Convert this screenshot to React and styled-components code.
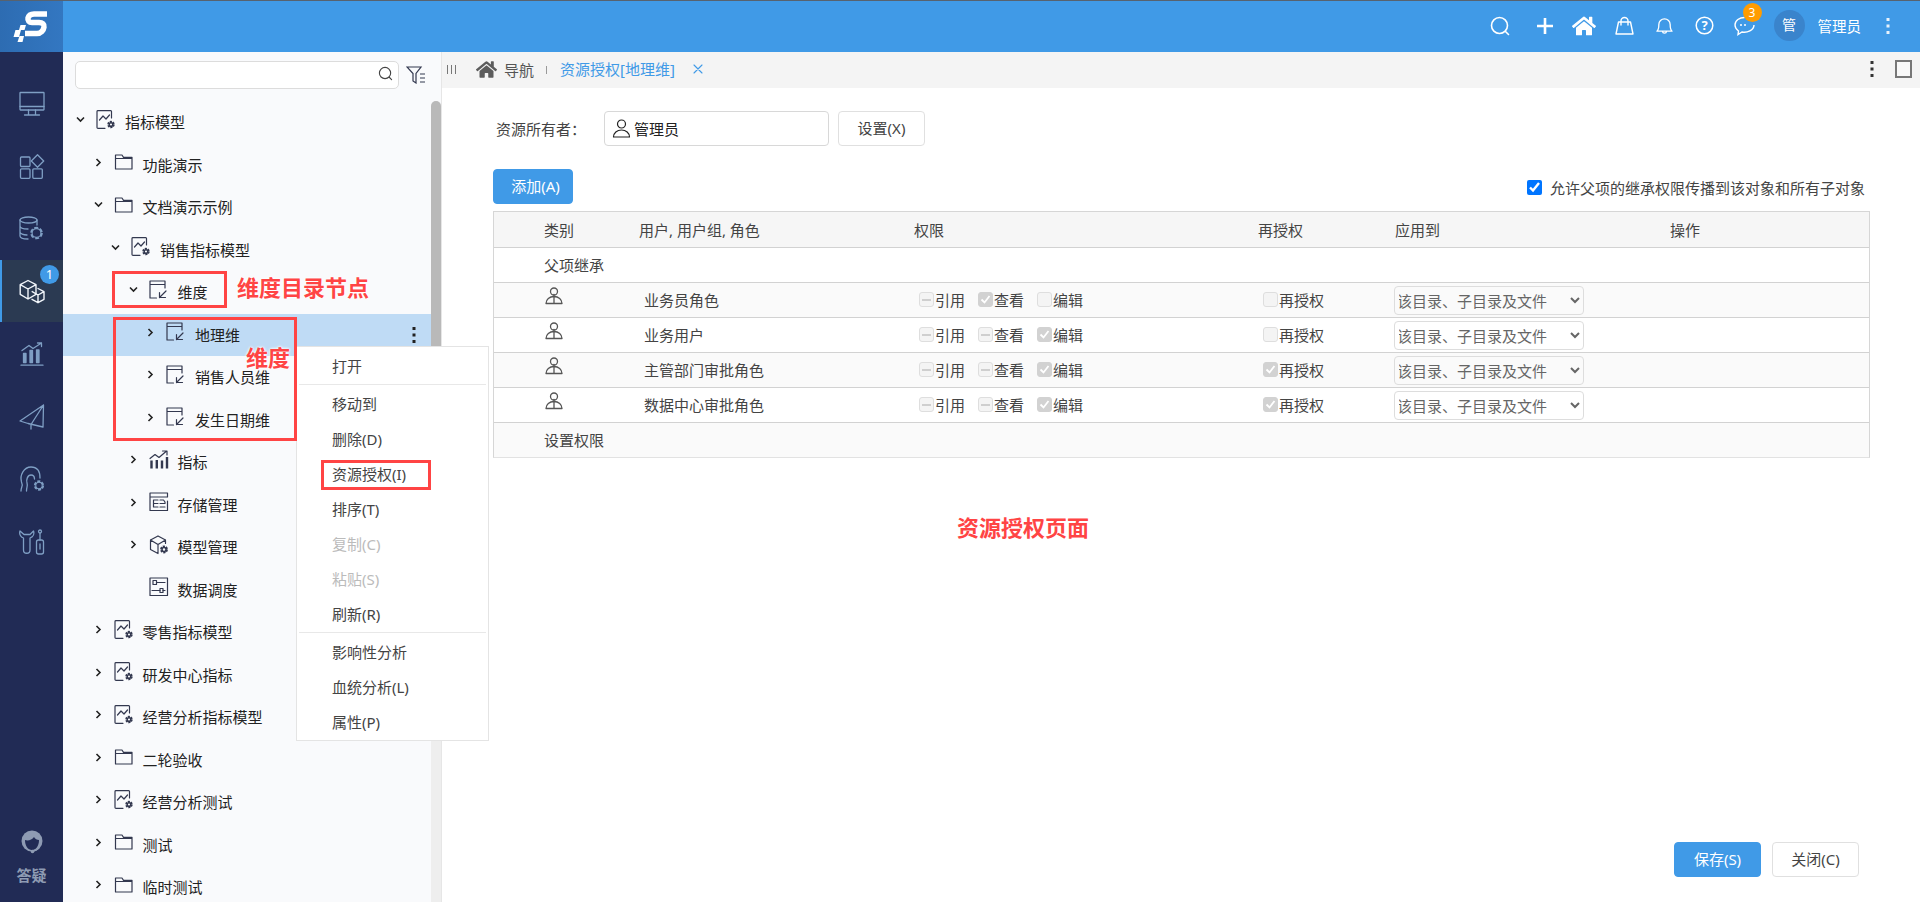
import React from "react";
import styled, { createGlobalStyle } from "styled-components";
import { FaHome } from "react-icons/fa";

const BLUE = "#409ae7";
const RED = "#ff4444";

const GlobalStyle = createGlobalStyle`
  html, body { margin: 0; padding: 0; height: 100%; overflow: hidden; }
  #root { height: 100%; }
  * { box-sizing: border-box; }
  body {
    font-family: "Noto Sans", "Noto Sans CJK SC", sans-serif;
    font-size: 15px;
    color: #333;
  }
`;

const Page = styled.div`
  position: relative;
  display: flex;
  width: 1920px;
  height: 902px;
  overflow: hidden;
  background: #fff;
`;

/* left rail */
const Rail = styled.div`
  width: 63px;
  flex: none;
  display: flex;
  flex-direction: column;
  background: #212b55;
`;

const Logo = styled.div`
  height: 52px;
  flex: none;
  border-top: 1px solid #57626f;
  background: linear-gradient(90deg, #2d6cb2, #3377c1);
  display: flex;
  align-items: center;
  justify-content: center;
`;

const RailNav = styled.div`
  padding-top: 20px;
  flex: 1;
`;

const RailItem = styled.div`
  position: relative;
  height: 62.5px;
  display: flex;
  align-items: center;
  justify-content: center;
  padding-top: 2px;
  color: ${(p) => (p.$active ? "#f2f6fb" : "#7f9fc4")};
  background: ${(p) => (p.$active ? "#2b3a52" : "transparent")};
  border-left: ${(p) => (p.$active ? `2px solid ${BLUE}` : "none")};
  padding-right: ${(p) => (p.$active ? "2px" : "0")};
`;

const RailBadge = styled.span`
  position: absolute;
  top: 5px;
  left: 38px;
  width: 19px;
  height: 19px;
  border-radius: 50%;
  background: ${BLUE};
  color: #fff;
  font-size: 13px;
  line-height: 19px;
  text-align: center;
`;

const HelpBox = styled.div`
  height: 72px;
  display: flex;
  flex-direction: column;
  align-items: center;
  gap: 10px;
  color: #8e9bb3;
  font-size: 15px;
  font-weight: 700;
  line-height: 22px;
`;

/* right side */
const Side = styled.div`
  flex: 1;
  min-width: 0;
  display: flex;
  flex-direction: column;
`;

const TopBar = styled.div`
  height: 52px;
  flex: none;
  border-top: 1px solid #57626f;
  background: ${BLUE};
  color: #fff;
  display: flex;
  align-items: center;
  justify-content: flex-end;
  padding: 0 30px 2px 0;
`;

const TopIcon = styled.span`
  position: relative;
  display: flex;
  align-items: center;
  justify-content: center;
  margin-right: ${(p) => p.$gap}px;
`;

const OrangeBadge = styled.span`
  position: absolute;
  top: -13px;
  left: 9px;
  width: 19px;
  height: 19px;
  border-radius: 50%;
  background: #ff9c00;
  color: #fff;
  font-size: 12px;
  line-height: 19px;
  text-align: center;
`;

const Avatar = styled.span`
  width: 31px;
  height: 31px;
  border-radius: 50%;
  background: #3a84cc;
  font-size: 14px;
  line-height: 30px;
  text-align: center;
  margin-right: 13px;
`;

const UserName = styled.span`
  font-size: 14.5px;
  line-height: 20px;
  margin-right: 25px;
`;

const Work = styled.div`
  flex: 1;
  min-height: 0;
  display: flex;
`;

/* tree panel */
const TreePanel = styled.div`
  width: 378px;
  flex: none;
  display: flex;
  flex-direction: column;
  background: #f9fafc;
`;

const SearchRow = styled.div`
  height: 49px;
  flex: none;
  padding: 9px 0 0 12px;
  display: flex;
  align-items: flex-start;
  gap: 7px;
`;

const SearchBox = styled.div`
  width: 324px;
  height: 28px;
  background: #fff;
  border: 1px solid #dcdcdc;
  border-radius: 5px;
  display: flex;
  align-items: center;
  justify-content: flex-end;
  padding: 0 5px 3px 0;
  color: #444;
`;

const FunnelWrap = styled.span`
  margin-top: 5px;
`;

const TreeBody = styled.div`
  flex: 1;
  min-height: 0;
  display: flex;
`;

const TreeList = styled.div`
  flex: 1;
  min-width: 0;
`;

const ScrollTrack = styled.div`
  width: 10px;
  flex: none;
  background: #eee;
  border-radius: 5px 5px 0 0;
`;

const ScrollThumb = styled.div`
  height: 540px;
  background: #b9b9b9;
  border-radius: 5px;
`;

const TreeRow = styled.div`
  height: 42.5px;
  display: flex;
  align-items: center;
  padding-left: ${(p) => 12 + p.$level * 17.5}px;
  background: ${(p) => (p.$selected ? "#bfdbf5" : "transparent")};
  color: #222;
`;

const Caret = styled.span`
  width: 11px;
  height: 12px;
  flex: none;
  margin-right: 10px;
  margin-top: -5px;
  display: flex;
  align-items: center;
  justify-content: center;
  visibility: ${(p) => (p.$leaf ? "hidden" : "visible")};
`;

const TreeIcon = styled.span`
  width: 20px;
  height: 20px;
  flex: none;
  margin-right: 9px;
  margin-top: -5px;
  color: #33384f;
`;

const TreeText = styled.span`
  line-height: 20px;
  white-space: nowrap;
`;

const RowMore = styled.span`
  margin-left: auto;
  margin-right: 15px;
  display: flex;
`;

/* main */
const Main = styled.div`
  flex: 1;
  min-width: 0;
  display: flex;
  flex-direction: column;
  border-left: 1px solid #e6e6e6;
`;

const TabBar = styled.div`
  height: 36px;
  flex: none;
  background: #f4f4f4;
  display: flex;
  align-items: center;
  padding: 0 0 2px 5px;
  color: #555;
`;

const Bars = styled.span`
  width: 9px;
  height: 9px;
  margin-right: 20px;
  border-left: 1px solid #777;
  border-right: 1px solid #777;
  position: relative;
  &::after {
    content: "";
    position: absolute;
    left: 3px;
    top: 0;
    height: 9px;
    border-left: 1px solid #777;
  }
`;

const TabHome = styled.span`
  display: flex;
  color: #5c5c5c;
  margin-right: 7px;
`;

const TabSep = styled.span`
  width: 1px;
  height: 8px;
  background: #999;
  margin: 2px 13px 0 12px;
`;

const TabActive = styled.span`
  color: ${BLUE};
  margin-right: 18px;
  line-height: 20px;
`;

const TabClose = styled.span`
  color: ${BLUE};
  display: flex;
`;

const TabTools = styled.span`
  margin-left: auto;
  margin-right: 8px;
  display: flex;
  align-items: center;
  gap: 21px;
  color: #333;
`;

const Maximize = styled.span`
  width: 17px;
  height: 18px;
  border: 2px solid #777;
  background: #f8f8f8;
`;

const Content = styled.div`
  flex: 1;
  min-height: 0;
  display: flex;
  flex-direction: column;
  padding: 23px 50px 25px 51px;
`;

const OwnerRow = styled.div`
  display: flex;
  align-items: center;
  height: 35px;
`;

const OwnerLabel = styled.span`
  width: 111px;
  padding-left: 3px;
  color: #444;
`;

const OwnerInput = styled.div`
  width: 225px;
  height: 35px;
  border: 1px solid #d8d8d8;
  border-radius: 4px;
  display: flex;
  align-items: center;
  gap: 3px;
  padding-left: 7px;
  color: #222;
`;

const Button = styled.button`
  font: inherit;
  height: 35px;
  width: ${(p) => p.$w || 87}px;
  margin-left: ${(p) => p.$ml || 0}px;
  padding: 0 0 2px ${(p) => (p.$pad ? p.$pad : 0)}px;
  border-radius: 4px;
  border: 1px solid ${(p) => (p.$primary ? BLUE : "#e0e0e0")};
  background: ${(p) => (p.$primary ? BLUE : "#fff")};
  color: ${(p) => (p.$primary ? "#fff" : "#444")};
`;

const ActionRow = styled.div`
  margin-top: 23px;
  display: flex;
  align-items: center;
  justify-content: space-between;
  padding-right: 5px;
`;

const InheritLabel = styled.label`
  display: flex;
  align-items: center;
  gap: 8px;
  color: #444;
  margin-top: 2px;
  input {
    width: 15px;
    height: 15px;
    margin: 0;
  }
`;

const Table = styled.div`
  margin-top: 7px;
  border: 1px solid #d6d6d6;
  border-bottom-color: #e2e2e2;
`;

const TableRow = styled.div`
  height: 35px;
  display: grid;
  grid-template-columns: 145px 275px 344px 137px 275px 1fr;
  align-items: center;
  padding-bottom: 1px;
  color: #444;
  background: ${(p) => (p.$shade ? "#fafafa" : "#fff")};
  border-top: ${(p) => (p.$first ? "none" : "1.5px solid #d2d2d2")};
`;

const HeadRow = styled(TableRow)`
  background: #f6f6f6;
`;

const FirstCell = styled.span`
  padding-left: 50px;
`;

const TypeCell = styled.span`
  padding-left: 51px;
  display: flex;
  margin-top: -8px;
  color: #555;
`;

const NameCell = styled.span`
  padding-left: 5px;
`;

const PermCell = styled.span`
  display: flex;
  align-items: center;
  gap: 13px;
  padding-left: 5px;
`;

const SelectCell = styled.span`
  display: flex;
  margin: 2px 0 0 -1px;
`;

const ApplySelect = styled.select`
  font: inherit;
  width: 190px;
  height: 29px;
  color: #666;
  background: transparent;
  border: 1px solid #ddd;
  border-radius: 4px;
  padding: 0;
  text-indent: -2px;
`;

const CheckWrap = styled.span`
  display: inline-flex;
  align-items: center;
`;

const Box = styled.span`
  width: 15px;
  height: 15px;
  margin-right: 1px;
  border-radius: 3px;
  border: 1px solid ${(p) => (p.$state === "on" ? "#d2d2d2" : "#dedede")};
  background: ${(p) => (p.$state === "on" ? "#d2d2d2" : "#f4f4f4")};
  display: flex;
  align-items: center;
  justify-content: center;
`;

const Footer = styled.div`
  margin-top: auto;
  display: flex;
  justify-content: flex-end;
  padding-right: 11px;
`;

/* context menu and the red notes lie over the page */
const Menu = styled.div`
  position: absolute;
  left: 296px;
  top: 346px;
  width: 193px;
  height: 395px;
  padding-top: 2px;
  background: #fff;
  border: 1px solid #e4e4e4;
`;

const MenuItem = styled.div`
  height: 35px;
  line-height: 34px;
  padding-left: 35px;
  color: ${(p) => (p.$disabled ? "#bbb" : "#444")};
`;

const MenuLine = styled.div`
  height: 1px;
  margin: 0 2px 2px;
  background: #e8e8e8;
`;

const RedBox = styled.div`
  position: absolute;
  left: ${(p) => p.$x}px;
  top: ${(p) => p.$y}px;
  width: ${(p) => p.$w}px;
  height: ${(p) => p.$h}px;
  border: 3px solid ${RED};
`;

const Note = styled.span`
  position: absolute;
  left: ${(p) => p.$x}px;
  top: ${(p) => p.$y}px;
  color: ${RED};
  font-size: 22px;
  font-weight: 700;
  line-height: 20px;
  white-space: nowrap;
  text-shadow: 0 0 3px #fff, 0 0 3px #fff;
`;

/* drawings */
const Ico = ({ size = 24, box = 24, sw = 1.3, children }) => (
  <svg
    width={size}
    height={size}
    viewBox={`0 0 ${box} ${box}`}
    fill="none"
    stroke="currentColor"
    strokeWidth={sw}
    strokeLinecap="round"
    strokeLinejoin="round"
    style={{ display: "block" }}
  >
    {children}
  </svg>
);

const Gear = ({ x, y, r = 3.2, sw = 1.1 }) => (
  <g>
    <circle cx={x} cy={y} r={r} strokeWidth={sw} />
    <circle
      cx={x}
      cy={y}
      r={r + 1}
      strokeWidth={1.9}
      strokeLinecap="butt"
      strokeDasharray={`${(r + 1) * 0.72} ${(r + 1) * 0.325}`}
    />
  </g>
);

const MonitorIcon = () => (
  <Ico size={26} box={26}>
    <rect x="1" y="1.5" width="24" height="17.5" rx="0.5" />
    <path d="M1 15.5h24M9.5 19v4M16.5 19v4M5.5 24h15" />
  </Ico>
);

const AppsIcon = () => (
  <Ico size={26} box={26}>
    <rect x="1.5" y="3" width="9.5" height="9.5" rx="1" />
    <path d="M18.5 0.8l6.2 6.2-6.2 6.2-6.2-6.2z" />
    <rect x="1.5" y="14.8" width="9.5" height="9.5" rx="1" />
    <rect x="13.8" y="14.8" width="9.5" height="9.5" rx="1" />
  </Ico>
);

const DataIcon = () => (
  <Ico size={26} box={26}>
    <ellipse cx="9.5" cy="4" rx="8.5" ry="3" />
    <path d="M1 4v16c0 1.7 3.5 3 8 3M1 10c0 1.7 3.5 3 8 3M1 16c0 1.7 3.5 3 7 3M18 4v5" />
    <Gear x={17.5} y={17} r={4.4} />
  </Ico>
);

const CubesIcon = () => (
  <Ico size={26} box={26} sw={1.4}>
    <path d="M9 1.5l8 4.2v9.6l-8 4.7-7.8-4.7V5.7zM1.2 5.7L9 10l8-4.3M9 10v10" />
    <path d="M19 9.5l6 3.2v7.6l-6 3.4-6-3.4M19 16v7.7M13.2 12.6L19 16l6-3.3" />
  </Ico>
);

const StatsIcon = () => (
  <Ico size={24} box={24}>
    <path d="M1 23.2h22" />
    <path d="M3.5 20.5v-9h2.5v9zM10 20.5v-12h2.5v12zM16.5 20.5V8H19v12.5z" fill="currentColor" />
    <path d="M2 8.5l7-5 4 3 8.5-5.5M17.5 1h4v3.5" />
  </Ico>
);

const PlaneIcon = () => (
  <Ico size={26} box={26}>
    <path d="M24.5 1L1 17l8 2.5 15 3.5zM24.5 1L12 20.5v4.5M9 19.5l3 1" />
  </Ico>
);

const ServiceIcon = () => (
  <Ico size={26} box={26}>
    <path d="M2 25c0-4 2.5-5 .5-9C.5 9 5 1 12 1s9 5 9 11" />
    <path d="M7.5 25c0-4 1.5-5 .5-8-1-3 .5-8 4-8 2 0 3.5 1.5 3.5 4" />
    <Gear x={20} y={19.5} r={3.2} />
  </Ico>
);

const ToolsIcon = () => (
  <Ico size={26} box={26}>
    <path d="M1 2C0 5 1.500 8 4.500 9v12a3.200 3.200 0 006.500 0V9c3-1 4.500-4 3.500-7l-3.500 3.500H5z" />
    <rect x="17.5" y="11" width="7" height="14" rx="2" />
    <path d="M21 4v7M21 15v5" />
    <circle cx="21" cy="2.5" r="1.5" />
  </Ico>
);

const HeadsetIcon = () => (
  <svg width="24" height="24" viewBox="0 0 24 24" style={{ display: "block" }}>
    <circle cx="12" cy="11" r="10.5" fill="#8e9bb3" />
    <path d="M5 10c3 1 7 0 9-3 1 2 3 3 5 3 0 6-3 10-7 10s-7-4-7-10z" fill="#212b55" />
    <path d="M20 13c0 4-3 7-6.500 8" stroke="#8e9bb3" strokeWidth="1.5" fill="none" />
    <circle cx="12.5" cy="21.5" r="1.8" fill="#8e9bb3" />
  </svg>
);

const LogoMark = () => (
  <svg width="40" height="36" viewBox="0 0 40 36" style={{ display: "block" }}>
    <path
      d="M35 5H22c-3.500 0-5.500 2-6 4-.5 2.500 1 4.500 4 4.500h7c3.500 0 5.500 2 5 4.500-.5 3.500-3 6.500-7 6.500H13"
      fill="none"
      stroke="#fff"
      strokeWidth="5.5"
    />
    <g fill="#fff">
      <path d="M3.500 21h5.500l-2 7H1.500z" />
      <path d="M8.500 16h5.500l-1.500 5H7z" />
      <path d="M7.500 27h4.500l-1.500 6H5.500z" />
    </g>
  </svg>
);

const Chevron = ({ open }) => (
  <svg width="9" height="9" viewBox="0 0 9 9" fill="none" stroke="#222" strokeWidth="1.6">
    <path d={open ? "M1 2.5l3.500 3.500L8 2.500" : "M2.500 1L6 4.500 2.500 8"} />
  </svg>
);

const ModelIcon = () => (
  <Ico size={20} box={20} sw={1.2}>
    <path d="M15.500 8V1.500c0-.5-.3-.8-.8-.8H2C1.400.7 1 1 1 1.500v16c0 .5.400.8 1 .8h7" />
    <path d="M3.500 10l3.500-4 3 3 3.500-4" />
    <Gear x={15} y={14.5} r={1.8} sw={1.5} />
  </Ico>
);

const FolderIcon = () => (
  <Ico size={20} box={20} sw={1.2}>
    <path d="M1.500 3h6.500l1.500 2.300H18V17H1.500zM1.500 6.500H18" />
  </Ico>
);

const DimIcon = () => (
  <Ico size={20} box={20} sw={1.2}>
    <path d="M1 18V1h15v7M1 4.500h15M1 18h6.500" />
    <path d="M17 11l-6.500 6.500M10.500 12.500v5h6" />
  </Ico>
);

const MetricIcon = () => (
  <Ico size={20} box={20} sw={1.2}>
    <path d="M2.500 18.500v-8M7.800 18.500v-8.500M13 18.500v-8M18 18.500V7" strokeWidth="2.4" strokeLinecap="butt" />
    <path d="M1 8.500l5-4 4 3 7-6M13.500 1H18v4" />
  </Ico>
);

const StorageIcon = () => (
  <Ico size={20} box={20} sw={1.2}>
    <path d="M1 1h17.500v4H1zM1 5v13.500h17.500V9" />
    <path d="M9 8H4.500v7H9M4.500 11.500H9M11 8h3.500l1.500 2v1.500h-5M11 15h5" />
  </Ico>
);

const CubeGearIcon = () => (
  <Ico size={20} box={20} sw={1.2}>
    <path d="M9 1l7.500 4v3.500M1.500 5L9 1M1.500 5v9.500L9 18.500M1.500 5L9 9.500l7.500-4.500M9 9.500v9" />
    <Gear x={15} y={14.5} r={2} sw={1.5} />
  </Ico>
);

const ScheduleIcon = () => (
  <Ico size={20} box={20} sw={1.2}>
    <rect x="1" y="1" width="17.5" height="17.5" />
    <path d="M8 5.500h8M3 13.500h8M14 13.500h2" />
    <rect x="4" y="3.5" width="3.5" height="4" />
    <rect x="11" y="11.5" width="3" height="4" />
  </Ico>
);

const FunnelIcon = () => (
  <svg width="20" height="18" viewBox="0 0 20 18" fill="none" stroke="#33384f" strokeWidth="1.2" style={{ display: "block" }}>
    <path d="M1 1h14l-5 6.500V17l-3-2V7.500z" />
    <path d="M14 8h5M14 12h5M14 16h5" />
  </svg>
);

const Dots = ({ color }) => (
  <svg width="4" height="18" viewBox="0 0 4 18" fill={color} style={{ display: "block" }}>
    <rect x="0.5" y="1" width="3" height="3" />
    <rect x="0.5" y="7.5" width="3" height="3" />
    <rect x="0.5" y="14" width="3" height="3" />
  </svg>
);

const PersonIcon = () => (
  <Ico size={19} box={19} sw={1.2}>
    <circle cx="9.5" cy="5" r="4" />
    <path d="M1.500 18c0-4 3.500-7 8-7s8 3 8 7z" />
  </Ico>
);

const RoleIcon = () => (
  <Ico size={18} box={18} sw={1.3}>
    <circle cx="9" cy="4.5" r="3.5" />
    <path d="M1 16.500c0-4 3.500-7 8-7s8 3 8 7zM9 7.500v9" />
  </Ico>
);

const BoxMark = ({ state }) => {
  if (state === "on")
    return (
      <svg width="11" height="11" viewBox="0 0 11 11" fill="none" stroke="#fff" strokeWidth="1.8">
        <path d="M1.500 5.500l3 3 5-6.500" />
      </svg>
    );
  if (state === "part")
    return (
      <svg width="9" height="2" viewBox="0 0 9 2" style={{ display: "block" }}>
        <rect width="9" height="2" fill="#cfcfcf" />
      </svg>
    );
  return null;
};

const Check = ({ state, children }) => (
  <CheckWrap>
    <Box $state={state}>
      <BoxMark state={state} />
    </Box>
    {children}
  </CheckWrap>
);

const railItems = [
  { icon: <MonitorIcon /> },
  { icon: <AppsIcon /> },
  { icon: <DataIcon /> },
  { icon: <CubesIcon />, active: true, badge: 1 },
  { icon: <StatsIcon /> },
  { icon: <PlaneIcon /> },
  { icon: <ServiceIcon /> },
  { icon: <ToolsIcon /> },
];

const treeRows = [
  { level: 0, open: true, icon: <ModelIcon />, label: "指标模型" },
  { level: 1, icon: <FolderIcon />, label: "功能演示" },
  { level: 1, open: true, icon: <FolderIcon />, label: "文档演示示例" },
  { level: 2, open: true, icon: <ModelIcon />, label: "销售指标模型" },
  { level: 3, open: true, icon: <DimIcon />, label: "维度" },
  { level: 4, icon: <DimIcon />, label: "地理维", selected: true },
  { level: 4, icon: <DimIcon />, label: "销售人员维" },
  { level: 4, icon: <DimIcon />, label: "发生日期维" },
  { level: 3, icon: <MetricIcon />, label: "指标" },
  { level: 3, icon: <StorageIcon />, label: "存储管理" },
  { level: 3, icon: <CubeGearIcon />, label: "模型管理" },
  { level: 3, leaf: true, icon: <ScheduleIcon />, label: "数据调度" },
  { level: 1, icon: <ModelIcon />, label: "零售指标模型" },
  { level: 1, icon: <ModelIcon />, label: "研发中心指标" },
  { level: 1, icon: <ModelIcon />, label: "经营分析指标模型" },
  { level: 1, icon: <FolderIcon />, label: "二轮验收" },
  { level: 1, icon: <ModelIcon />, label: "经营分析测试" },
  { level: 1, icon: <FolderIcon />, label: "测试" },
  { level: 1, icon: <FolderIcon />, label: "临时测试" },
];

const roleRows = [
  { name: "业务员角色", perms: ["part", "on", "off"], again: "off" },
  { name: "业务用户", perms: ["part", "part", "on"], again: "off" },
  { name: "主管部门审批角色", perms: ["part", "part", "on"], again: "on" },
  { name: "数据中心审批角色", perms: ["part", "part", "on"], again: "on" },
];

const permNames = ["引用", "查看", "编辑"];

const menuGroups = [
  [{ label: "打开" }],
  [
    { label: "移动到" },
    { label: "删除(D)" },
    { label: "资源授权(I)" },
    { label: "排序(T)" },
    { label: "复制(C)", disabled: true },
    { label: "粘贴(S)", disabled: true },
    { label: "刷新(R)" },
  ],
  [{ label: "影响性分析" }, { label: "血统分析(L)" }, { label: "属性(P)" }],
];

export default function App() {
  return (
    <Page>
      <GlobalStyle />
      <Rail>
        <Logo>
          <LogoMark />
        </Logo>
        <RailNav>
          {railItems.map((item, i) => (
            <RailItem key={i} $active={item.active}>
              {item.icon}
              {item.badge && <RailBadge>{item.badge}</RailBadge>}
            </RailItem>
          ))}
        </RailNav>
        <HelpBox>
          <HeadsetIcon />
          答疑
        </HelpBox>
      </Rail>

      <Side>
        <TopBar>
          <TopIcon $gap={26}>
            <Ico size={20} box={20} sw={1.6}>
              <circle cx="9.5" cy="9.5" r="8" />
              <path d="M15.500 15.500l3 3" />
            </Ico>
          </TopIcon>
          <TopIcon $gap={18}>
            <Ico size={18} box={18} sw={2.6}>
              <path d="M9 1v16M1 9h16" strokeLinecap="butt" />
            </Ico>
          </TopIcon>
          <TopIcon $gap={19}>
            <FaHome size={24} />
          </TopIcon>
          <TopIcon $gap={22}>
            <Ico size={19} box={19} sw={1.4}>
              <path d="M3.500 6h12l2.500 12H1z" />
              <path d="M6 9V5a3.500 3.500 0 017 0v4" />
            </Ico>
          </TopIcon>
          <TopIcon $gap={22}>
            <Ico size={17} box={18} sw={1.4}>
              <path d="M1 15c2-1.500 2-3 2-7a6 6 0 0112 0c0 4 0 5.500 2 7zM7 15.500c0 2 4 2 4 0" />
            </Ico>
          </TopIcon>
          <TopIcon $gap={20}>
            <svg width="19" height="19" viewBox="0 0 19 19" style={{ display: "block" }}>
              <circle cx="9.5" cy="9.5" r="8.3" fill="none" stroke="#fff" strokeWidth="1.5" />
              <text x="9.5" y="14" textAnchor="middle" fontSize="13" fontWeight="700" fill="#fff">?</text>
            </svg>
          </TopIcon>
          <TopIcon $gap={19}>
            <svg width="21" height="20" viewBox="0 0 21 20" fill="none" stroke="#fff" strokeWidth="1.4" style={{ display: "block" }}>
              <path d="M10.500 1.500c-5 0-9.500 3-9.500 7.500 0 2.500 1.500 4.500 3.500 6l-.5 3.500 4-2.500c5 1 12-1.500 12-7" />
              <circle cx="7" cy="9" r="1" fill="#fff" stroke="none" />
              <circle cx="11" cy="9" r="1" fill="#fff" stroke="none" />
            </svg>
            <OrangeBadge>3</OrangeBadge>
          </TopIcon>
          <Avatar>管</Avatar>
          <UserName>管理员</UserName>
          <Dots color="#e8f2fc" />
        </TopBar>

        <Work>
          <TreePanel>
            <SearchRow>
              <SearchBox>
                <Ico size={15} box={16} sw={1.2}>
                  <circle cx="7.5" cy="7.5" r="6" />
                  <path d="M12 12l2.500 2.500" />
                </Ico>
              </SearchBox>
              <FunnelWrap>
                <FunnelIcon />
              </FunnelWrap>
            </SearchRow>
            <TreeBody>
              <TreeList>
                {treeRows.map((row) => (
                  <TreeRow key={row.label} $level={row.level} $selected={row.selected}>
                    <Caret $leaf={row.leaf}>
                      <Chevron open={row.open} />
                    </Caret>
                    <TreeIcon>{row.icon}</TreeIcon>
                    <TreeText>{row.label}</TreeText>
                    {row.selected && (
                      <RowMore>
                        <Dots color="#222" />
                      </RowMore>
                    )}
                  </TreeRow>
                ))}
              </TreeList>
              <ScrollTrack>
                <ScrollThumb />
              </ScrollTrack>
            </TreeBody>
          </TreePanel>

          <Main>
            <TabBar>
              <Bars />
              <TabHome>
                <FaHome size={21} />
              </TabHome>
              导航
              <TabSep />
              <TabActive>资源授权[地理维]</TabActive>
              <TabClose>
                <Ico size={10} box={10} sw={1.1}>
                  <path d="M1 1l8 8M9 1l-8 8" />
                </Ico>
              </TabClose>
              <TabTools>
                <Dots color="#333" />
                <Maximize />
              </TabTools>
            </TabBar>

            <Content>
              <OwnerRow>
                <OwnerLabel>资源所有者：</OwnerLabel>
                <OwnerInput>
                  <PersonIcon />
                  管理员
                </OwnerInput>
                <Button $ml={9}>设置(X)</Button>
              </OwnerRow>

              <ActionRow>
                <Button $primary $w={80} $pad={5}>添加(A)</Button>
                <InheritLabel>
                  <input type="checkbox" defaultChecked />
                  允许父项的继承权限传播到该对象和所有子对象
                </InheritLabel>
              </ActionRow>

              <Table>
                <HeadRow $first>
                  <FirstCell>类别</FirstCell>
                  <span>用户, 用户组, 角色</span>
                  <span>权限</span>
                  <span>再授权</span>
                  <span>应用到</span>
                  <span>操作</span>
                </HeadRow>
                <TableRow>
                  <FirstCell>父项继承</FirstCell>
                </TableRow>
                {roleRows.map((row, i) => (
                  <TableRow key={row.name} $shade={i % 2 === 0}>
                    <TypeCell>
                      <RoleIcon />
                    </TypeCell>
                    <NameCell>{row.name}</NameCell>
                    <PermCell>
                      {row.perms.map((state, k) => (
                        <Check key={k} state={state}>{permNames[k]}</Check>
                      ))}
                    </PermCell>
                    <PermCell>
                      <Check state={row.again}>再授权</Check>
                    </PermCell>
                    <SelectCell>
                      <ApplySelect defaultValue="all">
                        <option value="all">该目录、子目录及文件</option>
                      </ApplySelect>
                    </SelectCell>
                  </TableRow>
                ))}
                <TableRow $shade>
                  <FirstCell>设置权限</FirstCell>
                </TableRow>
              </Table>

              <Footer>
                <Button $primary>保存(S)</Button>
                <Button $ml={11}>关闭(C)</Button>
              </Footer>
            </Content>
          </Main>
        </Work>
      </Side>

      <Menu>
        {menuGroups.map((group, g) => (
          <React.Fragment key={g}>
            {g > 0 && <MenuLine />}
            {group.map((item) => (
              <MenuItem key={item.label} $disabled={item.disabled}>{item.label}</MenuItem>
            ))}
          </React.Fragment>
        ))}
      </Menu>

      <RedBox $x={112} $y={271} $w={115} $h={37} />
      <RedBox $x={113} $y={317} $w={184} $h={124} />
      <RedBox $x={321} $y={460} $w={110} $h={30} />
      <Note $x={237} $y={277}>维度目录节点</Note>
      <Note $x={246} $y={347}>维度</Note>
      <Note $x={957} $y={517}>资源授权页面</Note>
    </Page>
  );
}
